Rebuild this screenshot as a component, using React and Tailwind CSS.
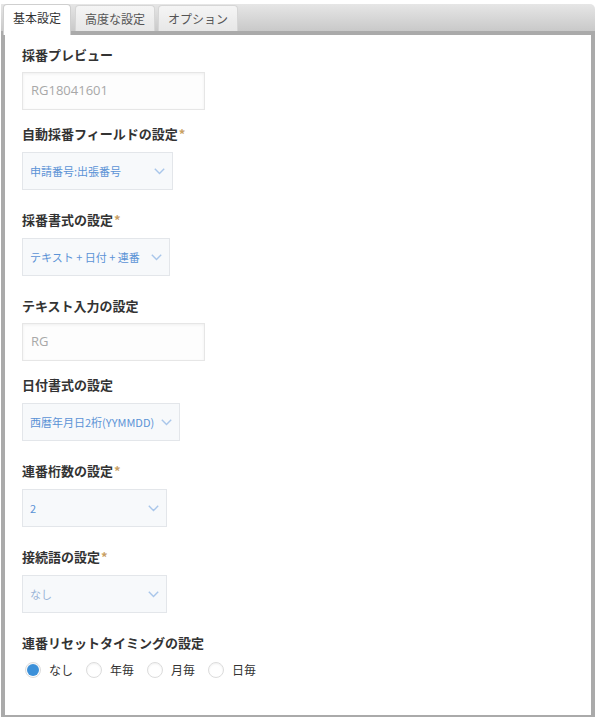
import { useState } from "react";

const Chevron = () => (
  <svg width="11" height="7" viewBox="0 0 11 7" fill="none" className="shrink-0">
    <path d="M0.8 0.8 L5.5 5.6 L10.2 0.8" stroke="#a9c6ea" strokeWidth="1.4" />
  </svg>
);

const Label = ({ text, required, gap = "mb-[7px]" }) => (
  <div className={`text-[13px] leading-[20px] font-bold text-[#333] ${gap}`}>
    {text}
    {required && <span className="text-[#c9a063] ml-[1px]">*</span>}
  </div>
);

const TextBox = ({ value }) => (
  <div className="w-[183px] h-[38px] border border-[#e6e6e6] bg-[#fdfdfd] shadow-[inset_0_1px_3px_rgba(0,0,0,0.06)] flex items-center pl-[8px] text-[13px] text-[#a8a8a8] font-['Open_Sans',sans-serif]">
    {value}
  </div>
);

const SelectBox = ({ value, width, muted }) => (
  <div
    className={`h-[38px] border border-[#e3e6ea] bg-[#f7f9fb] flex items-center justify-between pl-[7px] pr-[7px] text-[11px] whitespace-nowrap ${muted ? "text-[#9ab4d8]" : "text-[#5b93d6]"}`}
    style={{ width }}
  >
    <span>{value}</span>
    <Chevron />
  </div>
);

const tabs = ["基本設定", "高度な設定", "オプション"];
const resets = ["なし", "年毎", "月毎", "日毎"];

const App = () => {
  const [active, setActive] = useState(0);
  const [reset, setReset] = useState(0);

  return (
    <div className="w-[597px] h-[717px] bg-white pt-[4px] font-['Noto_Sans_CJK_JP',sans-serif]">
      <div className="ml-[1px] w-[594px]">
        <div className="h-[31px] flex items-end gap-[3px] pl-[2px] rounded-tr-[5px] bg-gradient-to-b from-[#e6e6e6] to-[#c9c9c9] border-b-4 border-[#aaa]">
          {tabs.map((t, i) =>
            i === active ? (
              <button
                key={t}
                onClick={() => setActive(i)}
                className="relative z-10 mb-[-4px] h-[31px] px-[9px] mr-[1px] bg-white border border-b-0 border-[#cfcfcf] rounded-t-[4px] text-[12px] text-[#333] leading-none pb-[4px]"
              >
                {t}
              </button>
            ) : (
              <button
                key={t}
                onClick={() => setActive(i)}
                className="h-[26px] px-[9px] bg-gradient-to-b from-[#f5f5f5] to-[#e7e7e7] border border-b-0 border-[#d6d6d6] rounded-t-[4px] text-[12px] text-[#555] leading-none"
              >
                {t}
              </button>
            )
          )}
        </div>
        <div className="h-[684px] border-x-4 border-b-4 border-[#aaa] rounded-b-[2px] pt-[10px] pl-[17px]">
          <Label text="採番プレビュー" />
          <TextBox value="RG18041601" />

          <div className="mt-[14px]">
            <Label text="自動採番フィールドの設定" required gap="mb-[8px]" />
            <SelectBox value="申請番号:出張番号" width={151} />
          </div>

          <div className="mt-[20px]">
            <Label text="採番書式の設定" required gap="mb-[8px]" />
            <SelectBox value="テキスト + 日付 + 連番" width={148} />
          </div>

          <div className="mt-[20px]">
            <Label text="テキスト入力の設定" />
            <TextBox value="RG" />
          </div>

          <div className="mt-[14px]">
            <Label text="日付書式の設定" gap="mb-[8px]" />
            <SelectBox value="西暦年月日2桁(YYMMDD)" width={158} />
          </div>

          <div className="mt-[20px]">
            <Label text="連番桁数の設定" required gap="mb-[8px]" />
            <SelectBox value="2" width={145} />
          </div>

          <div className="mt-[20px]">
            <Label text="接続語の設定" required gap="mb-[8px]" />
            <SelectBox value="なし" width={145} muted />
          </div>

          <div className="mt-[20px]">
            <div className="text-[13px] leading-[20px] font-bold text-[#333]">連番リセットタイミングの設定</div>
            <div className="flex items-center mt-[9px] ml-[3px]">
              {resets.map((r, i) => (
                <label key={r} className="flex items-center mr-[13px] cursor-pointer" onClick={() => setReset(i)}>
                  <span className="w-[16px] h-[16px] rounded-full border border-[#dcdcdc] bg-white shadow-[inset_0_1px_2px_rgba(0,0,0,0.06)] flex items-center justify-center">
                    {reset === i && <span className="w-[12px] h-[12px] rounded-full bg-[#3b90d9]" />}
                  </span>
                  <span className="ml-[8px] text-[12px] leading-[16px] text-[#333]">{r}</span>
                </label>
              ))}
            </div>
          </div>
        </div>
      </div>
    </div>
  );
};

export default App;
